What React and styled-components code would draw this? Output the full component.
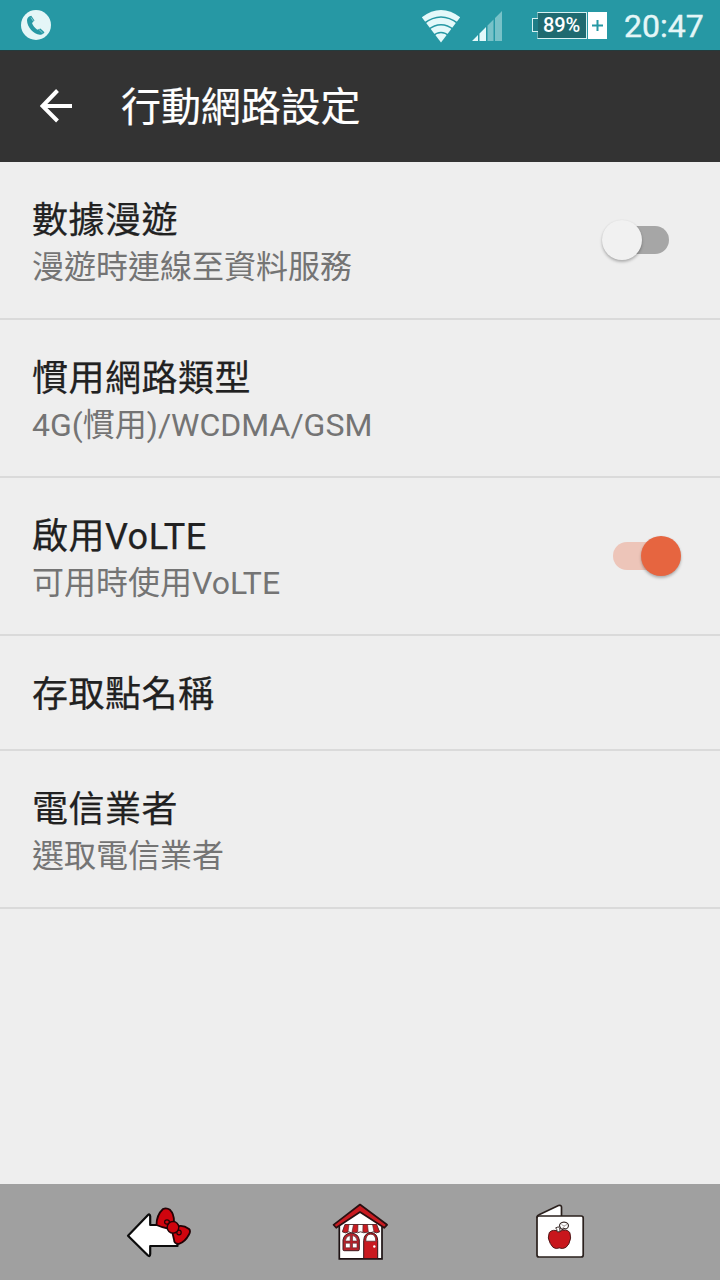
import styled, { createGlobalStyle } from "styled-components";

const GlobalStyle = createGlobalStyle`
  * {
    box-sizing: border-box;
  }

  body {
    margin: 0;
    background-color: #eeeeee;
    font-family: Roboto, "Noto Sans CJK TC", sans-serif;
  }
`;

const Screen = styled.div`
  display: flex;
  flex-direction: column;
  width: 720px;
  height: 1280px;
  background-color: #eeeeee;
  overflow: hidden;
`;

const StatusBar = styled.div`
  display: flex;
  align-items: center;
  flex-shrink: 0;
  height: 50px;
  padding: 0 16px 0 21px;
  background-color: #2698a4;

  svg {
    display: block;
    flex-shrink: 0;
  }
`;

const StatusSpacer = styled.div`
  flex: 1;
`;

const StatusIcons = styled.div`
  display: flex;
  gap: 11px;
`;

const Battery = styled.div`
  display: flex;
  align-items: center;
  margin-left: 29px;
`;

const BatteryTip = styled.div`
  width: 6px;
  height: 14px;
  margin-right: -1px;
  border: 1px solid #d8f1f2;
  border-right: none;
  background-color: #1f7d86;
  z-index: 1;
`;

const BatteryLevel = styled.div`
  display: flex;
  align-items: center;
  justify-content: center;
  width: 50px;
  height: 27px;
  padding-right: 1px;
  border: 1px solid #d8f1f2;
  border-left-color: #6fb0b5;
  background-color: #1f6a70;
  color: #ffffff;
  font-size: 20px;
  font-weight: 500;
  letter-spacing: -0.2px;
`;

const BatteryCharge = styled.div`
  display: flex;
  align-items: center;
  justify-content: center;
  width: 19px;
  height: 27px;
  margin-left: 1px;
  background-color: #ffffff;
`;

const Clock = styled.div`
  width: 80px;
  margin-left: 17px;
  padding-top: 2px;
  color: #e4f6f7;
  font-size: 32px;
  line-height: 50px;
  white-space: nowrap;
  -webkit-text-stroke: 0.4px #e4f6f7;
`;

const ActionBar = styled.header`
  display: flex;
  align-items: center;
  flex-shrink: 0;
  height: 112px;
  padding: 0 0 2px 40px;
  background-color: #333333;
  border-top: 1px solid #233b3d;

  h1 {
    margin: 0 0 0 48px;
    padding-top: 5px;
    color: #ffffff;
    font-size: 40px;
    line-height: 60px;
    font-weight: 400;
    letter-spacing: -0.1px;
    -webkit-text-stroke: 0.2px #ffffff;
  }
`;

const List = styled.main`
  flex: 1;
`;

const Row = styled.div`
  display: flex;
  align-items: center;
  justify-content: space-between;
  height: ${({ $short }) => ($short ? "115px" : "158px")};
  padding: 0 39px 0 32px;
  border-bottom: 2px solid #dadada;
`;

const RowText = styled.div`
  padding-top: 5px;
`;

const RowTitle = styled.div`
  color: #212121;
  font-size: 36px;
  line-height: 48px;
  letter-spacing: 0.5px;
  -webkit-text-stroke: 0.25px #212121;
`;

const RowSummary = styled.div`
  color: #747474;
  font-size: 32px;
  line-height: 44px;
`;

const SwitchBox = styled.div`
  position: relative;
  display: flex;
  align-items: center;
  justify-content: center;
  width: 80px;
  height: 40px;
`;

const SwitchTrack = styled.div`
  width: 56px;
  height: 28px;
  border-radius: 14px;
  background-color: ${({ $on }) => ($on ? "#edc5b9" : "#a6a6a6")};
`;

const SwitchThumb = styled.div`
  position: absolute;
  top: 0;
  left: ${({ $on }) => ($on ? "40px" : "1px")};
  width: 40px;
  height: 40px;
  border-radius: 50%;
  background-color: ${({ $on }) => ($on ? "#e66540" : "#f1f1f1")};
  box-shadow: 0 2px 3px rgba(0, 0, 0, 0.26), 0 0 2px rgba(0, 0, 0, 0.06);
`;

const NavBar = styled.nav`
  display: flex;
  align-items: center;
  flex-shrink: 0;
  height: 96px;
  padding-left: 115px;
  background-color: #a0a0a0;

  svg {
    display: block;
  }
`;

const NavButton = styled.div`
  width: ${({ $width }) => $width}px;
`;

const rows = [
  { id: "roaming", title: "數據漫遊", summary: "漫遊時連線至資料服務", toggle: true, on: false },
  { id: "network", title: "慣用網路類型", summary: "4G(慣用)/WCDMA/GSM" },
  { id: "volte", title: "啟用VoLTE", summary: "可用時使用VoLTE", toggle: true, on: true },
  { id: "apn", title: "存取點名稱" },
  { id: "operator", title: "電信業者", summary: "選取電信業者" },
];

function PhoneIcon() {
  return (
    <svg width="30" height="50" viewBox="0 0 30 50">
      <circle cx="15" cy="25" r="15" fill="#e4f6f7" />
      <path
        d="M6 20.500c0-2 1-3.600 2.600-4.300l1.700-.5 3.200 4.900-2.500 2.500c1 2.800 2.800 5 5.300 6.700l3.100-1.200 4.100 3.700c-1 1.700-2.500 2.700-4.500 2.500C12.500 34.500 6.200 27 6 20.500z"
        fill="#2698a4"
      />
      <path d="M10 17.500l2.700 4.200M17.800 29.300l3.800 3.700" stroke="#b5e0e3" strokeWidth=".7" />
    </svg>
  );
}

function WifiIcon() {
  return (
    <svg width="40" height="50" viewBox="0 0 40 50">
      <path d="M.8 17.300Q20 2.800 39.200 17.300L20 42.500z" fill="#e4f9fa" />
      <g fill="none" stroke="#2698a4" strokeWidth="1.600">
        <path d="M3 23.500Q20 10.500 37 23.500" />
        <path d="M7 29.800Q20 19.600 33 29.800" />
        <path d="M11.500 36.200Q20 28.800 28.500 36.200" />
      </g>
    </svg>
  );
}

function SignalIcon() {
  return (
    <svg width="31" height="50" viewBox="0 0 31 50">
      <path d="M0 41l6-6v6zM7.500 33.500l6.500-6.500v14H7.500z" fill="#e4f9fa" />
      <path d="M15.500 25.500L21.500 19.500V41h-6zM23 18l7-7v30h-7z" fill="#78c2c8" />
    </svg>
  );
}

function BackArrowIcon() {
  return (
    <svg width="33" height="34" viewBox="0 0 33 34">
      <path d="M17.500 1.500L2.500 17l15 15M2.500 17H32" fill="none" stroke="#fff" strokeWidth="4" />
    </svg>
  );
}

function RibbonArrowIcon() {
  return (
    <svg width="90" height="75" viewBox="0 0 90 75">
      <path
        d="M13 40.700L32.500 20.500q2.500-2.500 2.700.8V30h27.300v21H35.200v8q-.2 3.500-2.700 1z"
        fill="#fff"
        stroke="#0c0c0c"
        strokeWidth="2.200"
        strokeLinejoin="round"
      />
      <g fill="#d0040e" stroke="#210306" strokeWidth="1.800" strokeLinejoin="round">
        <path d="M41.500 30Q41.500 20 48 14q3.500-1.500 7 .8 4 4 4 11.500L53 33.500q-6-1-11.500-3.500z" />
        <path d="M62 31.500q6-2 12 2.500 2 2 0 5.500Q70 47 64 48.800q-5 .2-5-4.300L57 36z" />
        <ellipse cx="52" cy="27" rx="2.400" ry="2.200" strokeWidth="1.200" />
        <ellipse cx="64" cy="37.500" rx="2.200" ry="2.400" strokeWidth="1.200" />
        <circle cx="58" cy="32.300" r="5.800" strokeWidth="1.400" />
      </g>
    </svg>
  );
}

function HouseIcon() {
  return (
    <svg width="80" height="75" viewBox="0 0 80 75">
      <path d="M19.300 29L40 15l22 14v34.800H19.300z" fill="#fff" stroke="#1d1213" strokeWidth="1.700" />
      <path
        d="M40 9.500L13.500 29.800l2.700 3L40 17l24.200 15.800 2.900-3z"
        fill="#c91a20"
        stroke="#291012"
        strokeWidth="1.700"
        strokeLinejoin="round"
      />
      <path
        d="M25 29.500h31.500l3 7.300q-3 2-6 0-3 2-6.500 0-3 2-6.500 0-3 2-6 0-3.500 2-6 0-3 2-6 0z"
        fill="#fff"
        stroke="#49272a"
        strokeWidth=".9"
      />
      <path
        d="M25 29.500h4l-1 7.300q-3 1.600-5.500 0zM33.500 29.500H38l-.2 7.300q-3 1.600-5.800 0zM43 29.500h4.500l.8 7.300q-3 1.600-5.500 0zM52.500 29.500h4l3 7.300q-3 1.600-5.500 0z"
        fill="#c91a20"
        stroke="#49272a"
        strokeWidth=".6"
      />
      <path d="M23 54.500V45q1-6.500 8-7 7.500.5 8.300 7v9.500q0 1.200-1.200 1.200H24.200q-1.200 0-1.200-1.200z" fill="#b8222a" stroke="#421c20" strokeWidth="1" />
      <path
        d="M25.500 46v-.8q.8-4.200 4.700-4.700V46zM32.500 40.500q3.700.5 4.500 4.700v.8h-4.500zM25.500 48.200h4.700v4.600h-4.700zM32.500 48.200H37v4.600h-4.500z"
        fill="#fff"
        stroke="#522227"
        strokeWidth=".6"
      />
      <path d="M43.700 63.500V45.500q.5-7.500 7-7.800 6.700.3 7 7.800v18z" fill="#c91a20" stroke="#341317" strokeWidth="1" />
      <path d="M45.800 46.200q0-7 5-7t5 7z" fill="#fff" stroke="#4a2024" strokeWidth=".7" />
      <circle cx="54.300" cy="51.500" r="1.200" fill="#fff" />
    </svg>
  );
}

function AppleCardIcon() {
  return (
    <svg width="70" height="75" viewBox="0 0 70 75">
      <g fill="#fff" stroke="#2a201d" strokeWidth="1.700" strokeLinejoin="round">
        <path d="M12 22.500q0-2 2-2.700l19.500-9.300q2.500-.8 3 1.500v9.500z" />
        <rect x="12" y="21" width="46.200" height="41" rx="2" />
      </g>
      <path
        d="M34.300 36.500q-6.500-2.800-10 1-2.500 5.500 1 11 2.500 5.200 6 5 3-1.200 6 0 3.800.2 6.500-4.600 3.200-5.900 1-11.400-3.500-4.300-10.500-1z"
        fill="#c8161c"
        stroke="#511a1b"
        strokeWidth="1"
      />
      <path d="M35 36.800q.2-3.500-1.500-5l-2.800 1q1.500 1.500 1.500 4z" fill="#fff" stroke="#332421" strokeWidth=".9" />
      <path
        d="M34.500 31q0-3.500 4.500-4 4.500.5 4.500 4-.5 2.500-2.500 3-2-1-3.500.5-2-.5-3-3.500z"
        fill="#fff"
        stroke="#332421"
        strokeWidth="1.100"
      />
      <path d="M36.500 29.500l2.500 1.500 3-1.500M36.500 34l3-2.500" fill="none" stroke="#70625e" strokeWidth=".6" />
    </svg>
  );
}

function Switch({ on }) {
  return (
    <SwitchBox>
      <SwitchTrack $on={on} />
      <SwitchThumb $on={on} />
    </SwitchBox>
  );
}

function SettingRow({ title, summary, toggle, on }) {
  return (
    <Row $short={!summary}>
      <RowText>
        <RowTitle>{title}</RowTitle>
        {summary && <RowSummary>{summary}</RowSummary>}
      </RowText>
      {toggle && <Switch on={on} />}
    </Row>
  );
}

function App() {
  return (
    <Screen>
      <GlobalStyle />
      <StatusBar>
        <PhoneIcon />
        <StatusSpacer />
        <StatusIcons>
          <WifiIcon />
          <SignalIcon />
        </StatusIcons>
        <Battery>
          <BatteryTip />
          <BatteryLevel>89%</BatteryLevel>
          <BatteryCharge>
            <svg width="11" height="11" viewBox="0 0 11 11">
              <path d="M5.500 0v11M0 5.500h11" stroke="#2698a4" strokeWidth="2" />
            </svg>
          </BatteryCharge>
        </Battery>
        <Clock>20:47</Clock>
      </StatusBar>
      <ActionBar>
        <BackArrowIcon />
        <h1>行動網路設定</h1>
      </ActionBar>
      <List>
        {rows.map((row) => (
          <SettingRow key={row.id} {...row} />
        ))}
      </List>
      <NavBar>
        <NavButton $width={205}>
          <RibbonArrowIcon />
        </NavButton>
        <NavButton $width={205}>
          <HouseIcon />
        </NavButton>
        <NavButton $width={70}>
          <AppleCardIcon />
        </NavButton>
      </NavBar>
    </Screen>
  );
}

export default App;
